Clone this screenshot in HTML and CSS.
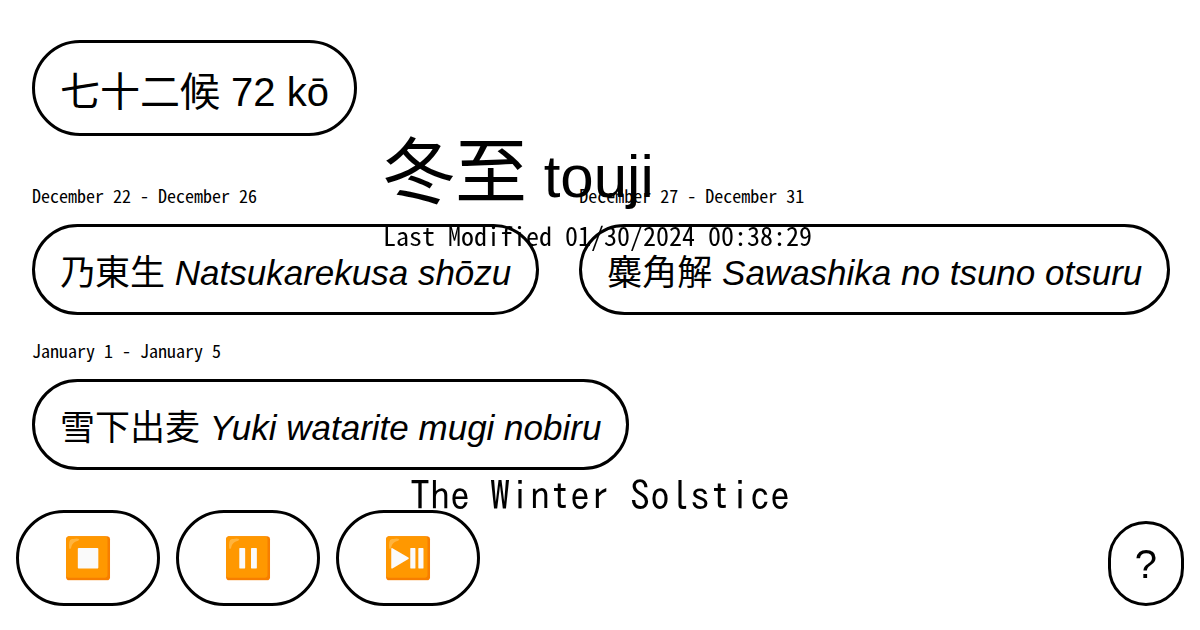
FILE: index.html
```
<!DOCTYPE html>
<html lang="ja">
<head>
<meta charset="utf-8">
<title>七十二候 72 kō</title>
<link rel="stylesheet" href="styles.css">
</head>
<body>
<main class="page">
  <header class="top"><a class="pill pill-large" href="#">七十二候 72 kō</a></header>
  <ul class="seasons">
    <li class="season"><p class="date">December 22 - December 26</p><a class="pill" href="#">乃東生 <em>Natsukarekusa shōzu</em></a></li>
    <li class="season"><p class="date">December 27 - December 31</p><a class="pill" href="#">麋角解 <em>Sawashika no tsuno otsuru</em></a></li>
    <li class="season"><p class="date">January 1 - January 5</p><a class="pill" href="#">雪下出麦 <em>Yuki watarite mugi nobiru</em></a></li>
  </ul>
</main>
<section class="overlay">
  <div class="heading">
    <h1 class="title">冬至<span class="romaji"> touji</span></h1>
    <p class="modified">Last Modified 01/30/2024 00:38:29</p>
  </div>
  <h2 class="subtitle">The Winter Solstice</h2>
</section>
<footer class="controls">
  <button class="pill pill-large media" type="button" aria-label="Stop">⏹️</button>
  <button class="pill pill-large media" type="button" aria-label="Pause">⏸️</button>
  <button class="pill pill-large media" type="button" aria-label="Play or pause">⏯️</button>
  <button class="pill pill-large help" type="button" aria-label="Help">?</button>
</footer>
</body>
</html>
```
FILE: styles.css
```
* { box-sizing: border-box; }
body {
  margin: 0;
  background: #fff;
  color: #000;
  font-family: "Noto Sans Mono CJK JP", "Noto Sans CJK JP", monospace;
}
p, h1, h2, ul { margin: 0; padding: 0; font-weight: 400; }
.page { padding: 40px 24px 0 32px; }
.top { display: flex; }
.pill {
  display: inline-flex;
  align-items: center;
  height: 91px;
  padding: 7px 25px 0;
  border: 3px solid #000;
  border-radius: 48px;
  background: transparent;
  color: #000;
  font-family: "Liberation Sans", "Noto Sans CJK JP", sans-serif;
  font-size: 35px;
  line-height: 48px;
  white-space: pre;
  text-decoration: none;
}
.pill-large { height: 96px; font-size: 40px; }
.seasons {
  display: flex;
  flex-wrap: wrap;
  gap: 24px 40px;
  margin-top: 48px;
  list-style: none;
}
.season { display: flex; flex-direction: column; align-items: flex-start; }
.date { height: 40px; font-size: 18px; line-height: 22px; }
.overlay {
  position: fixed;
  inset: 0;
  pointer-events: none;
}
.heading { position: absolute; left: 383px; top: 128px; }
.title {
  font-family: "Noto Sans CJK JP", sans-serif;
  font-size: 72px;
  line-height: 76px;
  white-space: nowrap;
}
.romaji { font-family: "Liberation Sans", sans-serif; font-size: 60px; }
.modified { font-size: 26px; line-height: 40px; }
.subtitle {
  position: absolute;
  inset: auto 0 111px;
  text-align: center;
  font-family: "IPAGothic", "Noto Sans Mono CJK JP", monospace;
  font-size: 40px;
  line-height: 48px;
}
.controls {
  position: fixed;
  inset: auto 16px 24px;
  display: flex;
  align-items: flex-end;
  gap: 16px;
}
.media { width: 144px; padding: 0; justify-content: center; }
.help { height: 85px; padding: 0 24px; margin-left: auto; }
```
